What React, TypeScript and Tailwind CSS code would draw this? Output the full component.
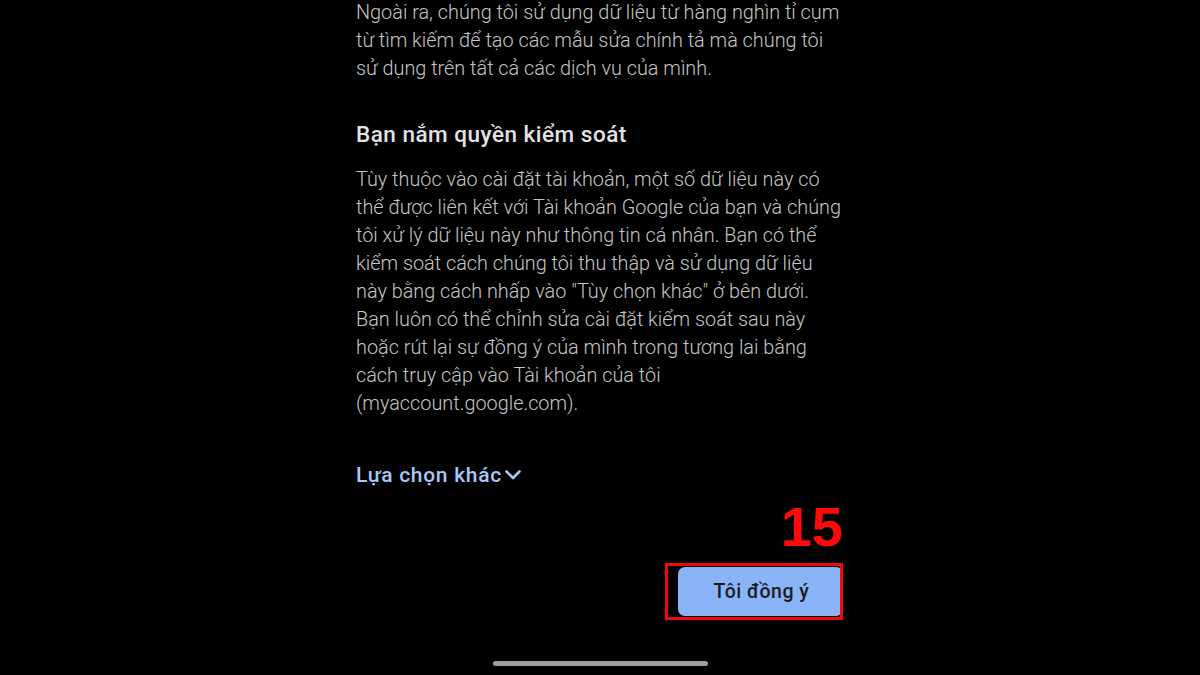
import React from 'react';

const intro = [
  'Ngoài ra, chúng tôi sử dụng dữ liệu từ hàng nghìn tỉ cụm',
  'từ tìm kiếm để tạo các mẫu sửa chính tả mà chúng tôi',
  'sử dụng trên tất cả các dịch vụ của mình.',
];

const control = [
  'Tùy thuộc vào cài đặt tài khoản, một số dữ liệu này có',
  'thể được liên kết với Tài khoản Google của bạn và chúng',
  'tôi xử lý dữ liệu này như thông tin cá nhân. Bạn có thể',
  'kiểm soát cách chúng tôi thu thập và sử dụng dữ liệu',
  'này bằng cách nhấp vào "Tùy chọn khác" ở bên dưới.',
  'Bạn luôn có thể chỉnh sửa cài đặt kiểm soát sau này',
  'hoặc rút lại sự đồng ý của mình trong tương lai bằng',
  'cách truy cập vào Tài khoản của tôi',
  '(myaccount.google.com).',
];

const Lines: React.FC<{ lines: string[] }> = ({ lines }) => (
  <p className="text-[19.85px] leading-[28px] font-light text-[#c4c7c5]">
    {lines.map((l, i) => (
      <span key={i} className="block whitespace-nowrap">
        {l}
      </span>
    ))}
  </p>
);

export default function App() {
  return (
    <div
      className="w-[1200px] h-[675px] bg-black overflow-hidden flex flex-col items-center"
      style={{ fontFamily: 'Roboto, "Noto Sans", sans-serif' }}
    >
      <div className="w-[488px] mt-[-1px] flex flex-col">
        <Lines lines={intro} />

        <h2 className="mt-[37px] text-[22.5px] leading-[28px] font-medium tracking-[0.5px] text-[#e3e3e3]">
          Bạn nắm quyền kiểm soát
        </h2>

        <div className="mt-[18px]">
          <Lines lines={control} />
        </div>

        <button className="mt-[43px] self-start flex items-center gap-[3px] text-[21px] leading-[28px] font-medium tracking-[0.7px] text-[#a8c7fa]">
          Lựa chọn khác
          <svg width="16" height="10" viewBox="0 0 16 10" fill="none">
            <path d="M1.5 1.5 8 8l6.5-6.5" stroke="currentColor" strokeWidth="2.6" strokeLinecap="round" strokeLinejoin="round" />
          </svg>
        </button>

        <div className="mt-[14px] self-end mr-[1px] text-[56px] leading-[48px] font-bold text-[#ff0a0a]" style={{ fontFamily: '"Liberation Sans", Arial, sans-serif' }}>
          15
        </div>

        <div className="mt-[12px] self-end mr-[1px] relative w-[178px] h-[57px]">
          <div className="absolute left-[13px] top-[4px] right-0 bottom-[4px] rounded-[7px] bg-[#8ab4f8] flex items-center justify-center pl-[2px]">
            <span className="text-[19.5px] font-medium tracking-[0.5px] text-[#1b1b1f]">Tôi đồng ý</span>
          </div>
          <div className="absolute inset-0 border-[3px] border-[#f00a0a]" />
        </div>
      </div>

      <div className="mt-auto mb-[9px] w-[215px] h-[5px] rounded-full bg-[#9e9e9e]" />
    </div>
  );
}
